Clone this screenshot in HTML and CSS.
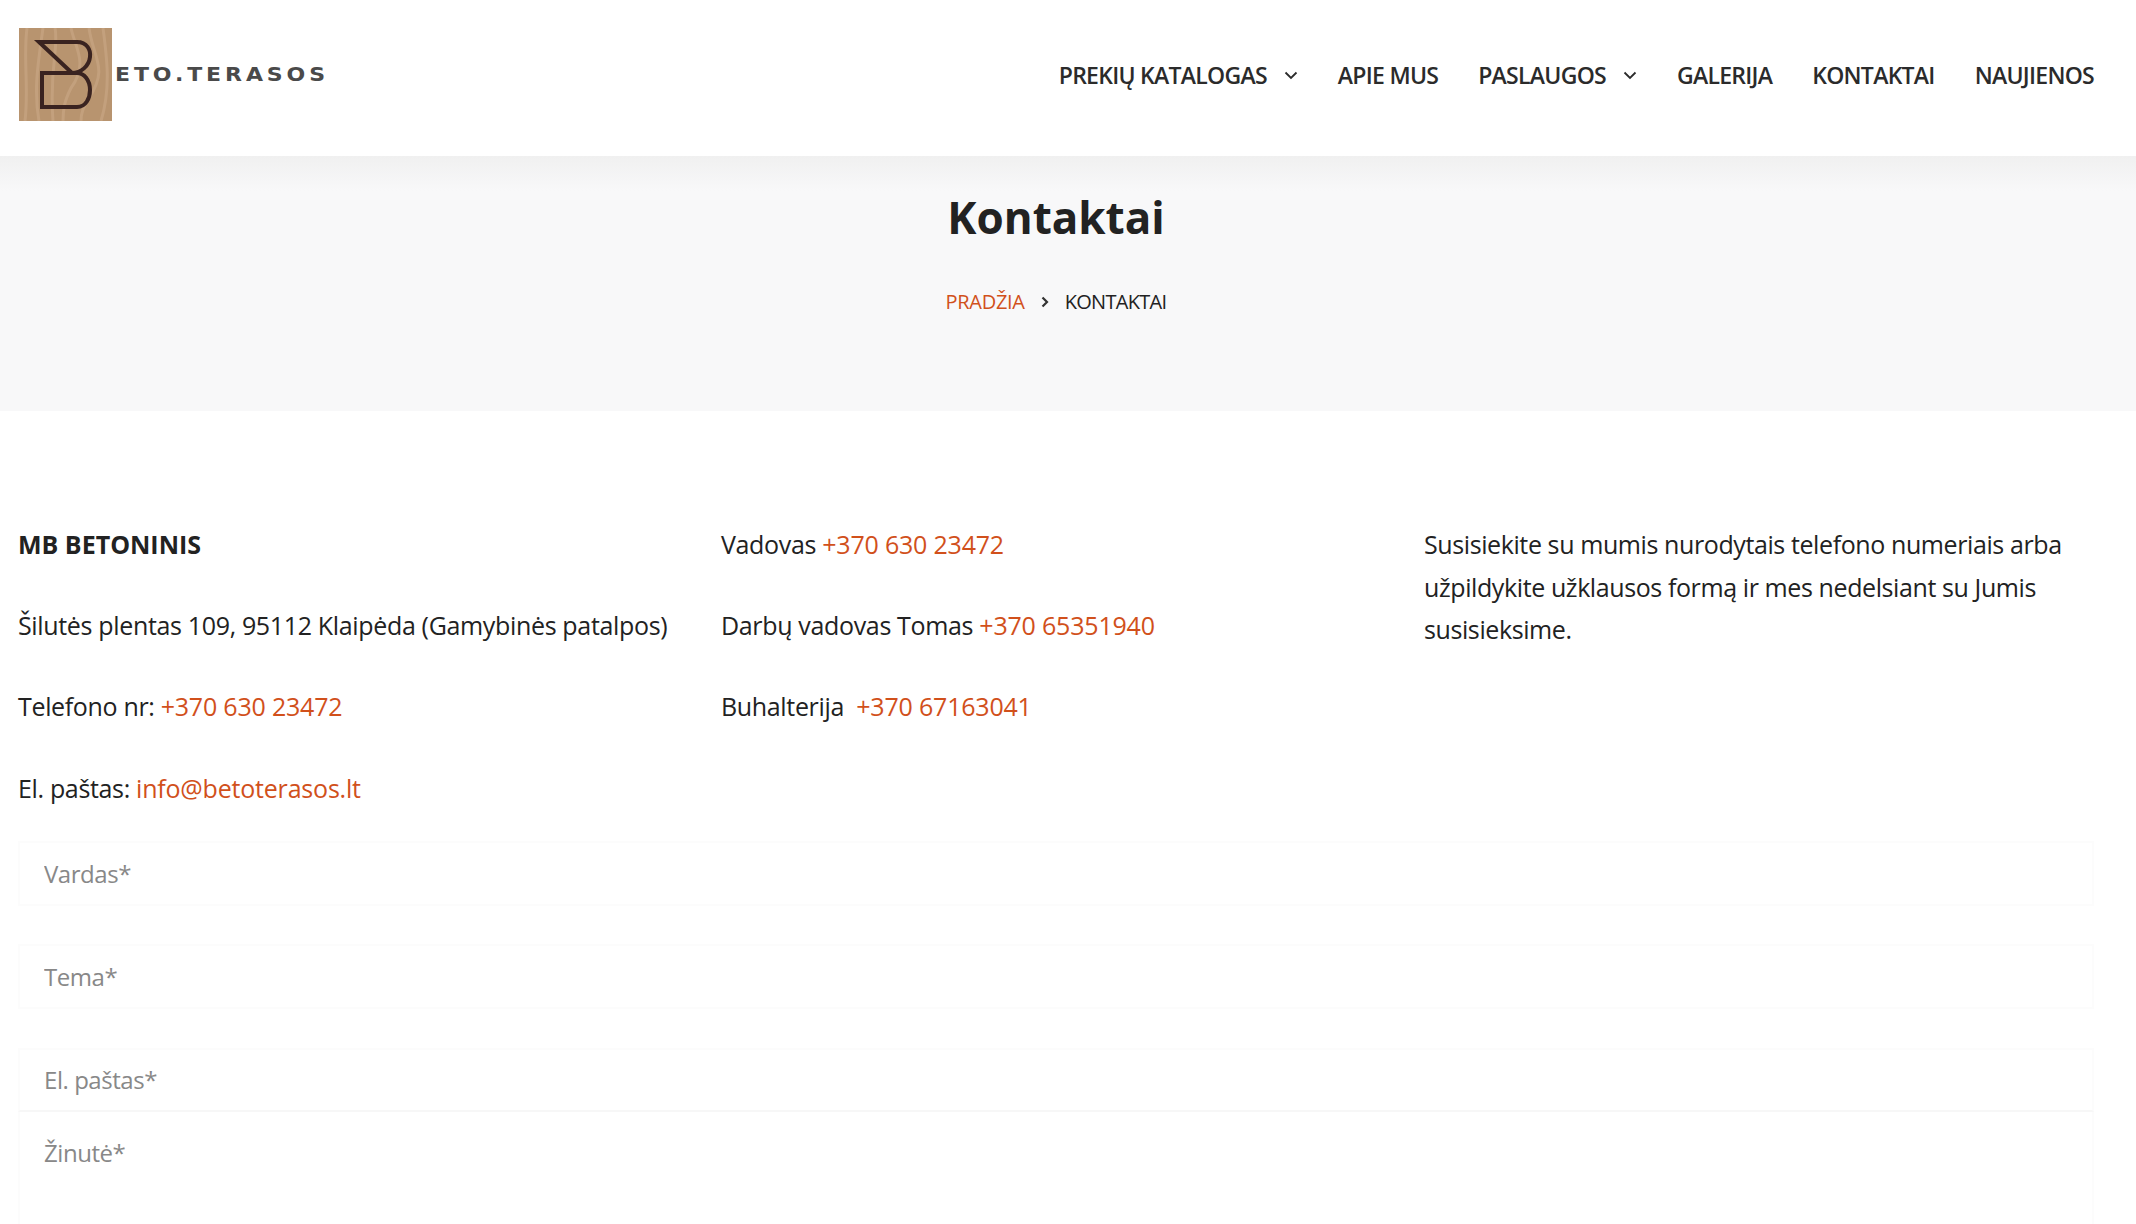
FILE: index.html
```html
<!DOCTYPE html>
<html lang="lt">
<head>
  <meta charset="UTF-8" />
  <title>Kontaktai</title>
  <link rel="stylesheet" href="styles.css">
</head>
<body>

  <!-- Header -->
  <header class="site-header">
    <a class="logo" href="#">
      <svg class="logo-mark" viewBox="0 0 93 93" width="93" height="93">
        <rect width="93" height="93" fill="#b8946f"/>
        <g fill="none" stroke="#cba987" stroke-width="3" opacity="0.6">
          <path d="M8 0 C4 30 10 60 6 93"/>
          <path d="M24 0 C20 30 14 60 20 93"/>
          <path d="M36 0 C40 20 30 40 34 93"/>
          <path d="M52 0 C56 20 70 35 52 60 C46 72 44 80 44 93"/>
          <path d="M70 0 C74 30 90 40 70 70 C64 80 62 85 62 93"/>
          <path d="M84 0 C88 30 92 60 82 93"/>
        </g>
        <path d="M20 14 H58 C68 14 72 22 71 29 C70 38 62 45 53 45 Z M53 45 H23 V79 H58 C67 79 71 70 71 62 C71 52 65 45 58 45 H53" fill="none" stroke="#3a2320" stroke-width="4"/>
      </svg>
      <span class="logo-text">ETO.TERASOS</span>
    </a>
    <nav class="main-nav">
      <a href="#">PREKIŲ KATALOGAS <svg class="chev" viewBox="0 0 14 9" width="14" height="9"><path d="M1.5 1.5 L7 7 L12.500 1.500" /></svg></a>
      <a href="#">APIE MUS</a>
      <a href="#">PASLAUGOS <svg class="chev" viewBox="0 0 14 9" width="14" height="9"><path d="M1.5 1.5 L7 7 L12.500 1.500" /></svg></a>
      <a href="#">GALERIJA</a>
      <a href="#">KONTAKTAI</a>
      <a href="#">NAUJIENOS</a>
    </nav>
  </header>

  <!-- Page title -->
  <section class="page-title">
    <h1>Kontaktai</h1>
    <div class="breadcrumb">
      <a href="#">PRADŽIA</a>
      <svg class="crumb-sep" viewBox="0 0 8 12" width="8" height="12"><path d="M1.500 1.500 L6 6 L1.500 10.500" /></svg>
      <span>KONTAKTAI</span>
    </div>
  </section>

  <main class="content">
    <div class="columns">
      <div class="col">
        <p><b>MB BETONINIS</b></p>
        <p>Šilutės plentas 109, 95112 Klaipėda (Gamybinės patalpos)</p>
        <p>Telefono nr: <a href="#">+370 630 23472</a></p>
        <p>El. paštas: <a href="#">info@betoterasos.lt</a></p>
      </div>
      <div class="col">
        <p>Vadovas <a href="#">+370 630 23472</a></p>
        <p>Darbų vadovas Tomas <a href="#">+370 65351940</a></p>
        <p>Buhalterija &nbsp;<a href="#">+370 67163041</a></p>
      </div>
      <div class="col col-text">
        <p>Susisiekite su mumis nurodytais telefono numeriais arba užpildykite užklausos formą ir mes nedelsiant su Jumis susisieksime.</p>
      </div>
    </div>

    <form class="contact-form">
      <input type="text" placeholder="Vardas*" />
      <input type="text" placeholder="Tema*" />
      <input class="last" type="text" placeholder="El. paštas*" />
      <textarea placeholder="Žinutė*"></textarea>
    </form>
  </main>

</body>
</html>
```

FILE: styles.css
```css
* {
  box-sizing: border-box;
  margin: 0;
  padding: 0;
}

html, body {
  height: 1224px;
  overflow: hidden;
}

body {
  background: #fff;
  color: #222;
  font-family: 'Open Sans', 'Noto Sans', sans-serif;
  font-size: 25px;
}

a {
  color: #d1501b;
  text-decoration: none;
}

.site-header {
  height: 156px;
  padding: 0 42px 6px 19px;
  display: flex;
  justify-content: space-between;
  align-items: center;
}

.logo {
  display: flex;
  align-items: center;
  margin-top: -2px;
}

.logo-text {
  margin-left: 3px;
  color: #4a4a4a;
  font-family: 'DejaVu Sans', sans-serif;
  font-size: 22px;
  font-weight: 700;
  letter-spacing: 3.900px;
  transform: scaleY(0.85);
}

.main-nav {
  display: flex;
  gap: 40px;
}

.main-nav a {
  color: #2b2b2b;
  font-size: 23px;
  font-weight: 600;
  display: flex;
  align-items: center;
  gap: 17px;
  letter-spacing: -0.72px;
}

.chev {
  fill: none;
  stroke: #2b2b2b;
  stroke-width: 1.8;
}

.page-title {
  height: 255px;
  padding: 31px 24px 0 0;
  text-align: center;
  background: linear-gradient(to bottom, #f0f0f0, #f8f8f9 35px, #f8f8f9);
}

.page-title h1 {
  font-size: 44px;
  font-weight: 700;
  line-height: 60px;
  color: #222;
}

.breadcrumb {
  margin-top: 41px;
  display: flex;
  justify-content: center;
  align-items: center;
  gap: 16px;
  font-size: 20px;
  line-height: 28px;
  letter-spacing: -0.3px;
}

.breadcrumb span {
  letter-spacing: -0.7px;
}

.crumb-sep {
  fill: none;
  stroke: #333;
  stroke-width: 2.2;
}

.content {
  padding: 112px 42px 0 18px;
}

.columns {
  display: grid;
  grid-template-columns: repeat(3, 703px);
}

.col p {
  line-height: 42px;
  margin-bottom: 39.200px;
  letter-spacing: -0.34px;
}

.col p a {
  letter-spacing: -0.2px;
}

.col p b {
  letter-spacing: 0;
}

.col-text {
  padding-right: 20px;
}

.col-text p {
  line-height: 42.600px;
  letter-spacing: -0.4px;
}

.contact-form {
  margin-top: -7px;
}

input, textarea {
  display: block;
  width: 100%;
  border: 2px solid #fcfcfc;
  background: #fff;
  padding: 0 24px;
  font-family: 'Open Sans', 'Noto Sans', sans-serif;
  font-size: 24px;
  letter-spacing: -0.45px;
  color: #222;
  outline: none;
}

input {
  height: 65px;
  margin-bottom: 38.500px;
}

input.last {
  height: 64px;
  margin-bottom: 0;
  border-bottom-color: #f7f7f7;
}

textarea {
  height: 112px;
  padding-top: 24px;
  resize: none;
  border-top: none;
  border-bottom: none;
}

::placeholder {
  color: #888;
  opacity: 1;
}
```
